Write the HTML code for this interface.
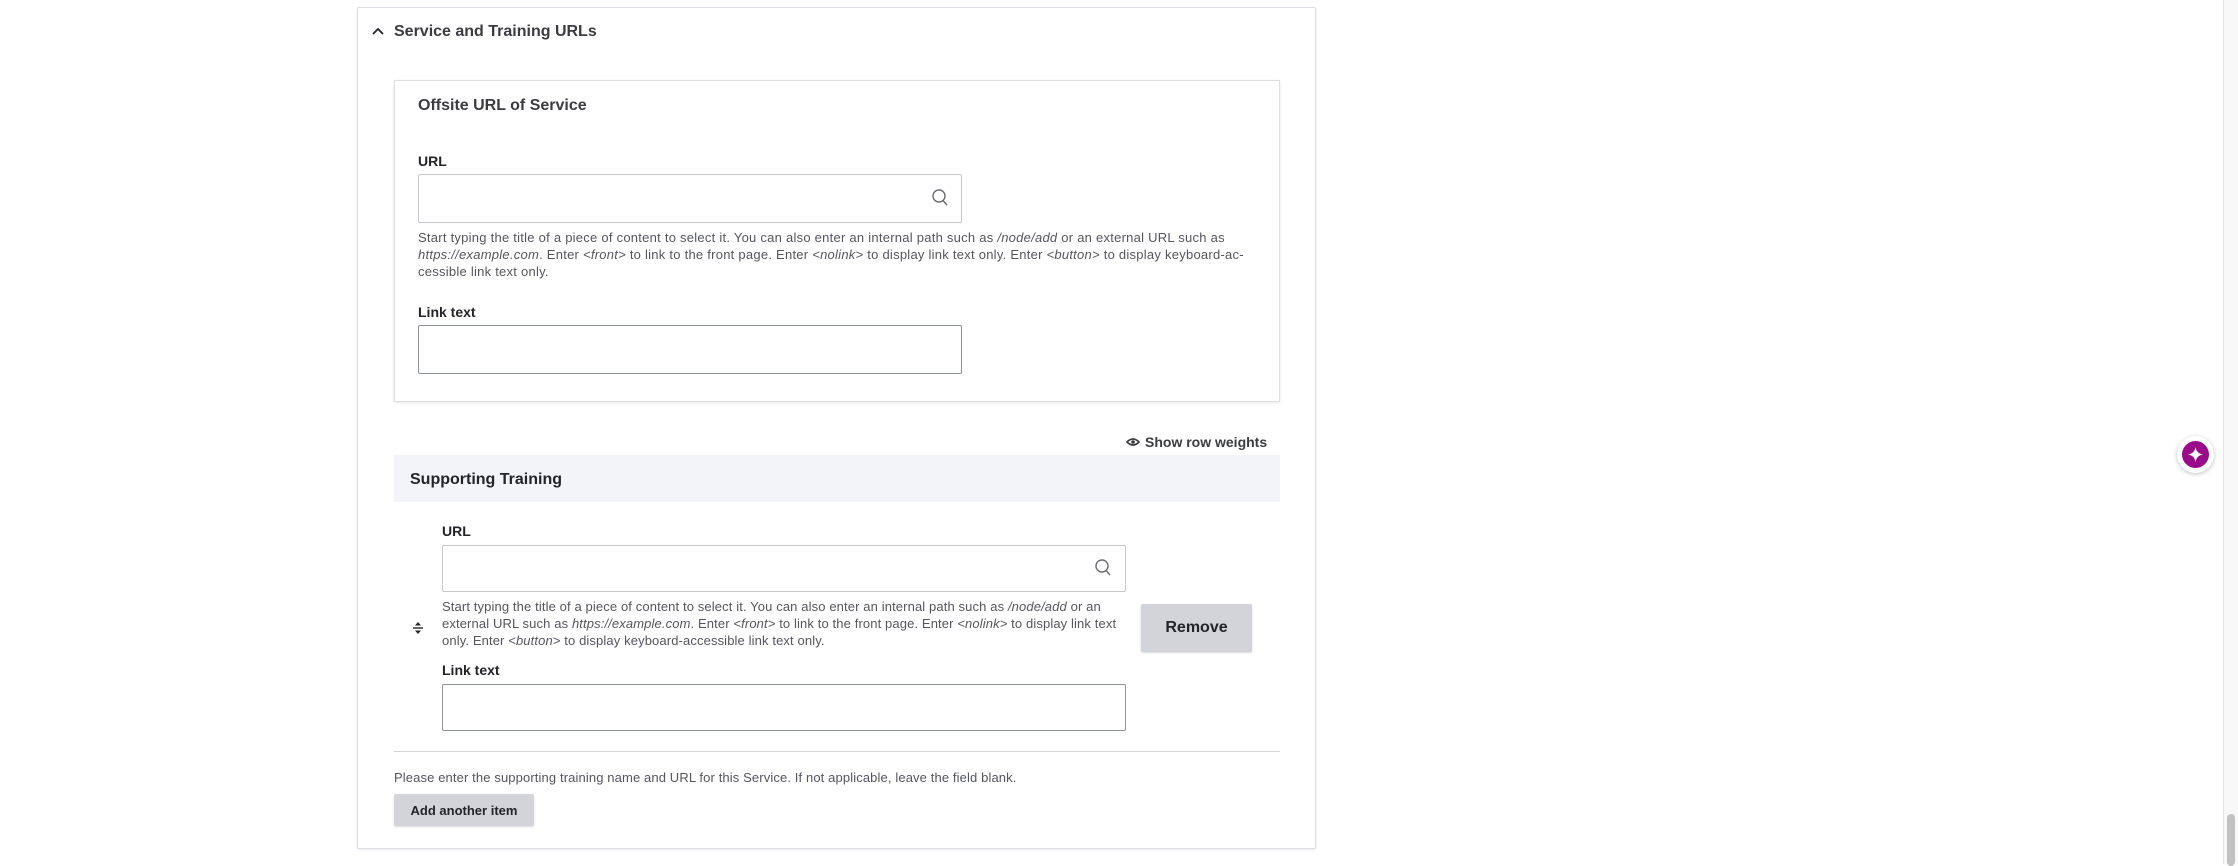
<!DOCTYPE html>
<html><head><meta charset="utf-8"><style>
*{box-sizing:border-box;margin:0;padding:0}
body{width:2238px;height:864px;background:#fff;font-family:"Liberation Sans",Arial,sans-serif;color:#232429;position:relative;overflow:hidden}
.abs{position:absolute}
.panel{left:357px;top:7px;width:959px;height:842px;border:1px solid #dedfe4;border-radius:2px;box-shadow:0 1px 3px rgba(0,0,0,.08)}
.b{font-weight:bold}
.inp{border:1px solid #8e929c;border-radius:2px;background:#fff}
.desc{font-size:13px;line-height:17px;color:#545560;letter-spacing:0.25px}
.lbl{font-size:14px;font-weight:bold}
.btn{background:#d3d4d9;border-radius:2px;font-weight:bold;color:#232429;display:flex;align-items:center;justify-content:center}
</style></head><body>
<div class="abs panel"></div>
<svg class="abs" style="left:371px;top:25px" width="14" height="12" viewBox="0 0 14 12"><path d="M2 9 L7 4 L12 9" fill="none" stroke="#232429" stroke-width="1.8"/></svg>
<div class="abs b" style="left:394px;top:23px;font-size:16px;color:#3b3c40">Service and Training URLs</div>

<div class="abs" style="left:394px;top:80px;width:886px;height:322px;border:1px solid #dedfe4;box-shadow:0 1px 3px rgba(0,0,0,.1)"></div>
<div class="abs b" style="left:418px;top:97px;font-size:16px;color:#3b3c40">Offsite URL of Service</div>
<div class="abs lbl" style="left:418px;top:153px">URL</div>
<div class="abs inp" style="left:418px;top:174px;width:544px;height:49px;border-color:#c5c7cc"></div>
<svg class="abs" style="left:931px;top:188px" width="18" height="20" viewBox="0 0 18 20"><circle cx="8" cy="8" r="6" fill="none" stroke="#6b6c72" stroke-width="1.4"/><path d="M12 12.5 L16 17" stroke="#6b6c72" stroke-width="1.4"/></svg>
<div class="abs desc" style="left:418px;top:229px;width:840px">Start typing the title of a piece of content to select it. You can also enter an internal path such as <i>/node/add</i> or an external URL such as <i>https://example.com</i>. Enter <i>&lt;front&gt;</i> to link to the front page. Enter <i>&lt;nolink&gt;</i> to display link text only. Enter <i>&lt;button&gt;</i> to display keyboard-ac­cessible link text only.</div>
<div class="abs lbl" style="left:418px;top:304px">Link text</div>
<div class="abs inp" style="left:418px;top:325px;width:544px;height:49px"></div>

<svg class="abs" style="left:1126px;top:436px" width="14" height="12" viewBox="0 0 14 12"><path d="M1 6 Q7 0 13 6 Q7 12 1 6Z" fill="none" stroke="#3b3c40" stroke-width="1.6"/><circle cx="7" cy="6" r="1.8" fill="#3b3c40"/></svg>
<div class="abs b" style="left:1145px;top:434px;font-size:14px;color:#3b3c40">Show row weights</div>

<div class="abs" style="left:394px;top:455px;width:886px;height:47px;background:#f3f4f9"></div>
<div class="abs b" style="left:410px;top:471px;font-size:16px">Supporting Training</div>
<div class="abs lbl" style="left:442px;top:523px">URL</div>
<div class="abs inp" style="left:442px;top:545px;width:684px;height:47px;border-color:#c5c7cc"></div>
<svg class="abs" style="left:1094px;top:558px" width="18" height="20" viewBox="0 0 18 20"><circle cx="8" cy="8" r="6" fill="none" stroke="#6b6c72" stroke-width="1.4"/><path d="M12 12.5 L16 17" stroke="#6b6c72" stroke-width="1.4"/></svg>
<div class="abs desc" style="left:442px;top:598px;width:690px;letter-spacing:0.12px">Start typing the title of a piece of content to select it. You can also enter an internal path such as <i>/node/add</i> or an external URL such as <i>https://example.com</i>. Enter <i>&lt;front&gt;</i> to link to the front page. Enter <i>&lt;nolink&gt;</i> to display link text only. Enter <i>&lt;button&gt;</i> to display keyboard-accessible link text only.</div>
<svg class="abs" style="left:412px;top:620px" width="12" height="16" viewBox="0 0 12 16"><path d="M6 2 L9 5.5 L3 5.5Z M6 14 L9 10.5 L3 10.5Z" fill="#232429"/><path d="M1 8 H11" stroke="#232429" stroke-width="1.4"/></svg>
<div class="abs btn" style="left:1141px;top:604px;width:111px;height:48px;font-size:16px;box-shadow:0 1px 2px rgba(0,0,0,.15)">Remove</div>
<div class="abs lbl" style="left:442px;top:662px">Link text</div>
<div class="abs inp" style="left:442px;top:684px;width:684px;height:47px"></div>

<div class="abs" style="left:394px;top:751px;width:886px;height:1px;background:#d4d4d8"></div>
<div class="abs desc" style="left:394px;top:769px;letter-spacing:0.12px">Please enter the supporting training name and URL for this Service. If not applicable, leave the field blank.</div>
<div class="abs btn" style="left:394px;top:794px;width:140px;height:32px;font-size:13px;box-shadow:0 1px 2px rgba(0,0,0,.15)">Add another item</div>

<div class="abs" style="left:2177px;top:436px;width:37px;height:37px;border-radius:50%;background:#fff;box-shadow:0 1px 4px rgba(0,0,0,.25)"></div>
<div class="abs" style="left:2182px;top:441px;width:27px;height:27px;border-radius:50%;background:#9a0b8a"></div>
<svg class="abs" style="left:2186px;top:445px" width="19" height="19" viewBox="0 0 19 19"><path d="M9.5 2 Q10.5 8.5 17 9.5 Q10.5 10.5 9.5 17 Q8.5 10.5 2 9.5 Q8.5 8.5 9.5 2Z" fill="#fff"/></svg>

<div class="abs" style="left:2223px;top:0;width:15px;height:864px;background:#f8f8f8;border-left:1px solid #e6e6e6"></div>
<div class="abs" style="left:2227px;top:814px;width:8px;height:52px;border-radius:4px;background:#c1c1c1"></div>
</body></html>
